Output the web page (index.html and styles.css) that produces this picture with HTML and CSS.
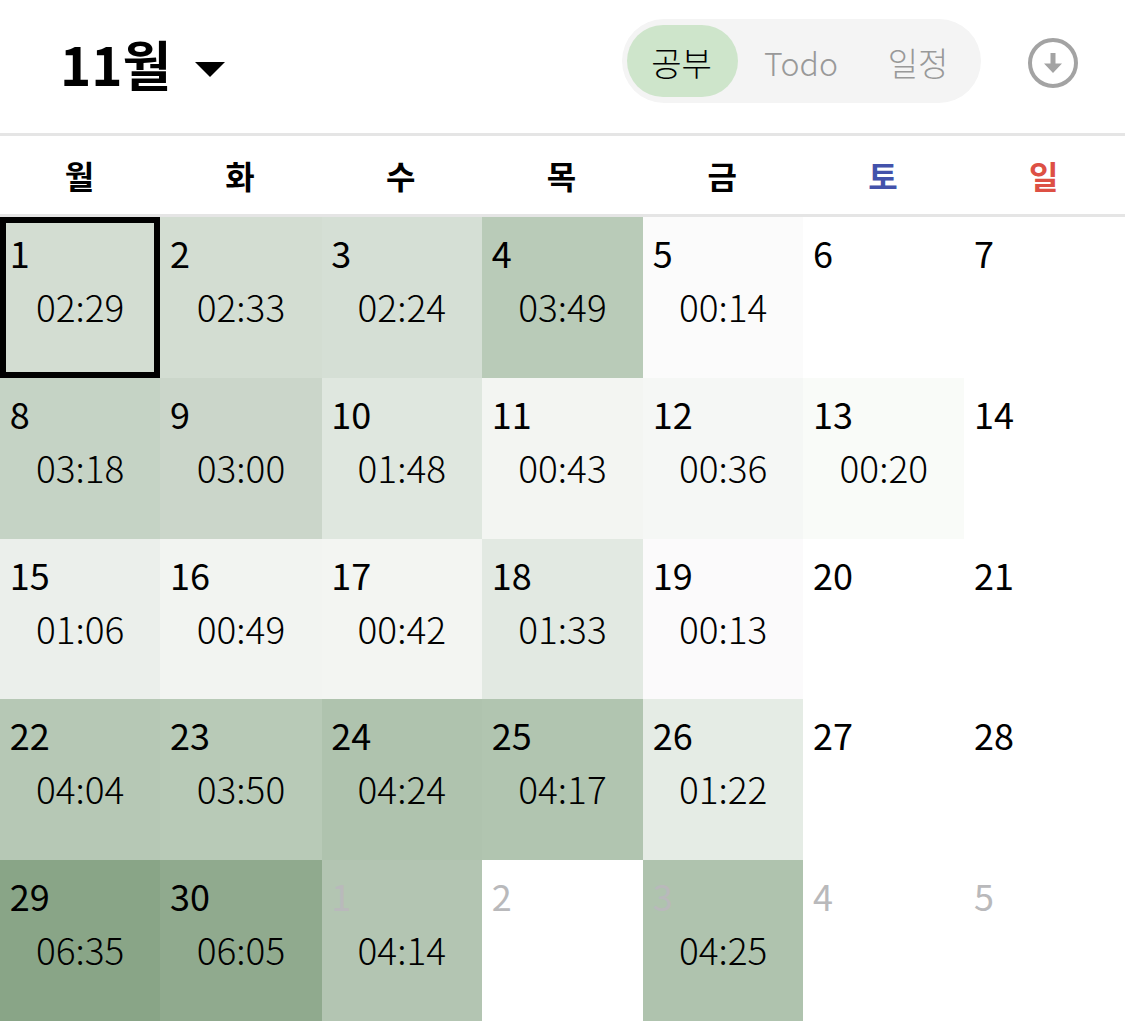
FILE: index.html
```html
<!DOCTYPE html>
<html lang="ko">
<head>
  <meta charset="UTF-8">
  <title>11월</title>
  <link rel="stylesheet" href="styles.css">
</head>
<body>
  <!-- Top bar -->
  <header class="top-bar">
    <div class="month">
      <h1>11월</h1>
      <span class="month-caret"></span>
    </div>
    <div class="tabs">
      <span class="tab tab-study active">공부</span>
      <span class="tab tab-todo">Todo</span>
      <span class="tab tab-plan">일정</span>
    </div>
    <svg class="download" width="54" height="54" viewBox="0 0 54 54">
      <circle cx="27" cy="27" r="23" fill="none" stroke="#a3a3a3" stroke-width="4"/>
      <path d="M24.5 17h5v10.5H36L27 37 18 27.5h6.5z" fill="#a3a3a3"/>
    </svg>
  </header>

  <!-- Weekdays -->
  <div class="weekdays">
    <span>월</span><span>화</span><span>수</span><span>목</span><span>금</span>
    <span class="sat">토</span><span class="sun">일</span>
  </div>

  <!-- Calendar -->
  <main class="calendar">
    <div class="day today" style="background:#d3ddd2"><b>1</b><time>02:29</time></div>
    <div class="day" style="background:#d3ddd2"><b>2</b><time>02:33</time></div>
    <div class="day" style="background:#d5dfd5"><b>3</b><time>02:24</time></div>
    <div class="day" style="background:#b9cbb8"><b>4</b><time>03:49</time></div>
    <div class="day" style="background:#fbfbfb"><b>5</b><time>00:14</time></div>
    <div class="day"><b>6</b></div>
    <div class="day"><b>7</b></div>

    <div class="day" style="background:#c5d3c5"><b>8</b><time>03:18</time></div>
    <div class="day" style="background:#cbd6ca"><b>9</b><time>03:00</time></div>
    <div class="day" style="background:#dfe7df"><b>10</b><time>01:48</time></div>
    <div class="day" style="background:#f3f5f2"><b>11</b><time>00:43</time></div>
    <div class="day" style="background:#f5f7f5"><b>12</b><time>00:36</time></div>
    <div class="day" style="background:#f9fbf8"><b>13</b><time>00:20</time></div>
    <div class="day"><b>14</b></div>

    <div class="day" style="background:#ebefeb"><b>15</b><time>01:06</time></div>
    <div class="day" style="background:#f2f4f1"><b>16</b><time>00:49</time></div>
    <div class="day" style="background:#f3f5f2"><b>17</b><time>00:42</time></div>
    <div class="day" style="background:#e2e9e2"><b>18</b><time>01:33</time></div>
    <div class="day" style="background:#fbfafb"><b>19</b><time>00:13</time></div>
    <div class="day"><b>20</b></div>
    <div class="day"><b>21</b></div>

    <div class="day" style="background:#b6c8b5"><b>22</b><time>04:04</time></div>
    <div class="day" style="background:#b8cab7"><b>23</b><time>03:50</time></div>
    <div class="day" style="background:#afc3ae"><b>24</b><time>04:24</time></div>
    <div class="day" style="background:#b1c5b0"><b>25</b><time>04:17</time></div>
    <div class="day" style="background:#e5ece5"><b>26</b><time>01:22</time></div>
    <div class="day"><b>27</b></div>
    <div class="day"><b>28</b></div>

    <div class="day" style="background:#89a587"><b>29</b><time>06:35</time></div>
    <div class="day" style="background:#90aa8e"><b>30</b><time>06:05</time></div>
    <div class="day other" style="background:#b3c5b2"><b>1</b><time>04:14</time></div>
    <div class="day other"><b>2</b></div>
    <div class="day other" style="background:#afc3ae"><b>3</b><time>04:25</time></div>
    <div class="day other"><b>4</b></div>
    <div class="day other"><b>5</b></div>
  </main>
</body>
</html>
```

FILE: styles.css
```css
/* General Styles */
body {
  font-family: "Noto Sans CJK KR", "Noto Sans", sans-serif;
  margin: 0;
  background: #fff;
  color: #000;
}

/* Top bar */
.top-bar {
  display: flex;
  align-items: center;
  height: 133px;
  padding-left: 60px;
  padding-right: 45px;
}

.month {
  display: flex;
  align-items: center;
  gap: 24px;
  margin-top: -8px;
  margin-right: auto;
}

.month h1 {
  margin: 0;
  font-size: 53px;
  line-height: 60px;
  font-weight: 700;
}

.month-caret {
  width: 0;
  height: 0;
  margin-top: 14px;
  border-left: 15px solid transparent;
  border-right: 15px solid transparent;
  border-top: 15px solid #000;
}

.tabs {
  display: flex;
  align-items: center;
  width: 349px;
  height: 72px;
  padding: 6px 5px;
  margin-top: -11px;
  margin-right: 45px;
  background: #f4f4f4;
  border-radius: 42px;
}

.tab {
  display: flex;
  align-items: center;
  justify-content: center;
  flex: none;
  box-sizing: border-box;
  height: 72px;
  padding-top: 2px;
  border-radius: 36px;
  font-size: 33px;
  font-weight: 300;
  color: #999;
}

.tab.active {
  background: #cee5cb;
  color: #000;
}

.tab-study {
  width: 111px;
  padding-right: 2px;
}

.tab-todo {
  width: 126px;
  font-size: 32px;
}

.tab-plan {
  width: 108px;
}

.download {
  margin-top: -8px;
}

/* Weekdays */
.weekdays {
  display: grid;
  grid-template-columns: repeat(7, 1fr);
  height: 78px;
  border-top: 3px solid #e5e5e5;
  border-bottom: 3px solid #e5e5e5;
}

.weekdays span {
  display: flex;
  align-items: center;
  justify-content: center;
  padding-right: 2px;
  font-size: 32px;
  font-weight: 700;
}

.weekdays .sat {
  color: #4352ab;
}

.weekdays .sun {
  color: #dd5044;
}

/* Calendar */
.calendar {
  display: grid;
  grid-template-columns: 160.4px 161.2px 160.4px 161px 160.4px 160.9px 160.7px;
  grid-auto-rows: 160.75px;
}

.day {
  display: flex;
  flex-direction: column;
  padding: 10px 0 0 9.7px;
  box-sizing: border-box;
}

.day b {
  font-size: 36px;
  line-height: 50px;
  font-weight: 400;
}

.day time {
  margin-top: 3px;
  margin-left: -9.7px;
  font-family: "Noto Sans CJK JP", "Noto Sans", sans-serif;
  font-size: 37px;
  line-height: 52px;
  font-weight: 300;
  font-feature-settings: "calt" 0, "kern" 0, "locl" 0;
  text-align: center;
  color: #000;
}

.day.today {
  outline: 6px solid #000;
  outline-offset: -6px;
}

.day.other b {
  color: #b9b9bb;
}
```
